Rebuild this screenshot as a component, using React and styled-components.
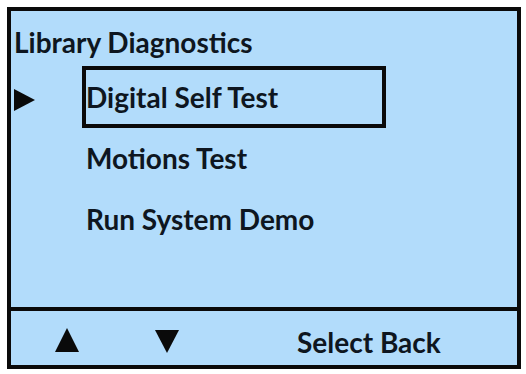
import styled, { createGlobalStyle } from 'styled-components';

const GlobalStyle = createGlobalStyle`
    html, body {
        margin: 0;
        padding: 0;
        background: #fff;
    }
    body {
        font-family: Lato, "Noto Sans", sans-serif;
    }
`;

const Page = styled.div`
    width: 526px;
    height: 374px;
    padding: 7px 5px 5px 7px;
    box-sizing: border-box;
`;

const Screen = styled.div`
    width: 514px;
    height: 362px;
    box-sizing: border-box;
    border: 4px solid #0a0a0a;
    background: #b2dcfb;
    display: flex;
    flex-direction: column;
    color: #0e1620;
    font-weight: 700;
    font-size: 28px;
    line-height: 34px;
`;

const Main = styled.div`
    height: 296px;
    box-sizing: border-box;
    padding: 14px 0 0 3px;
`;

const Title = styled.div``;

const Menu = styled.div`
    margin-top: 7px;
    display: flex;
    flex-direction: column;
`;

const Row = styled.div`
    display: grid;
    grid-template-columns: 68px 304px;
    align-items: center;
    height: 61px;
`;

const Pointer = styled.div`
    width: 0;
    height: 0;
    border-top: 11px solid transparent;
    border-bottom: 11px solid transparent;
    border-left: 21px solid #0a0a0a;
    margin-top: 6px;
    visibility: ${(p) => (p.$active ? 'visible' : 'hidden')};
`;

const Item = styled.div`
    height: 62px;
    box-sizing: border-box;
    border: 4px solid ${(p) => (p.$active ? '#0a0a0a' : 'transparent')};
    display: flex;
    align-items: center;
`;

const Toolbar = styled.div`
    flex: 1;
    border-top: 4px solid #0a0a0a;
    display: flex;
    align-items: flex-start;
    padding-top: 14px;
`;

const Arrow = styled.div`
    width: 0;
    height: 0;
    border-left: 12px solid transparent;
    border-right: 12px solid transparent;
    ${(p) =>
        p.$down
            ? 'border-top: 23px solid #0a0a0a;'
            : 'border-bottom: 24px solid #0a0a0a;'}
    margin-left: ${(p) => p.$offset}px;
    margin-top: ${(p) => (p.$down ? 5 : 3)}px;
`;

const Label = styled.div`
    margin-left: 118px;
`;

const items = ['Digital Self Test', 'Motions Test', 'Run System Demo'];

const App = () => {
    const selected = 0;
    return (
        <Page>
            <GlobalStyle />
            <Screen>
                <Main>
                    <Title>Library Diagnostics</Title>
                    <Menu>
                        {items.map((name, i) => (
                            <Row key={name}>
                                <Pointer $active={i === selected} />
                                <Item $active={i === selected}>{name}</Item>
                            </Row>
                        ))}
                    </Menu>
                </Main>
                <Toolbar>
                    <Arrow $offset={44} />
                    <Arrow $down $offset={76} />
                    <Label>Select Back</Label>
                </Toolbar>
            </Screen>
        </Page>
    );
};

export default App;
